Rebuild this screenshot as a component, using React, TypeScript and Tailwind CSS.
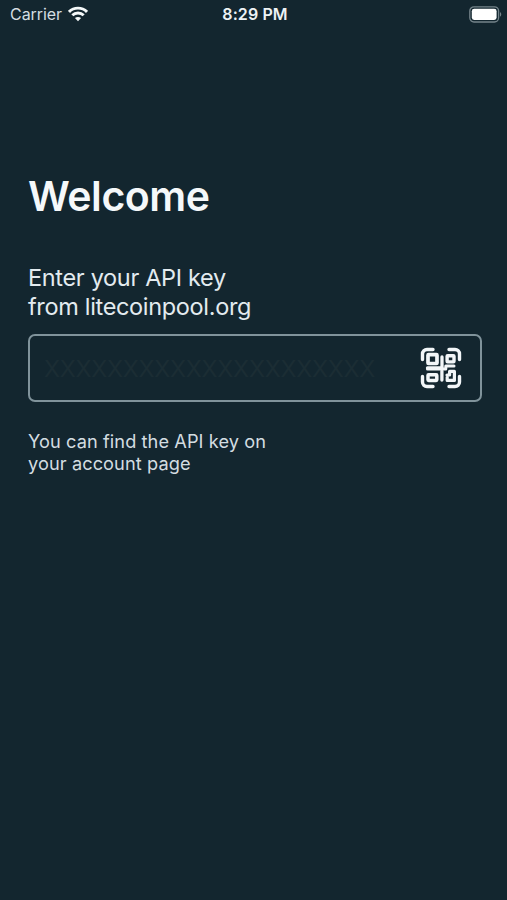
import { useState } from 'react'

function WifiIcon() {
  return (
    <svg width="20" height="16" viewBox="0 0 20 16" fill="none" stroke="#f4f8f9" strokeWidth="2.9">
      <path d="M1 5.9C6 .9 14 .9 19 5.9" />
      <path d="M4.3 9.3c3.2-3.1 8.2-3.1 11.4 0" />
      <path d="M10 15.2 6.9 12.1c1.7-1.6 4.5-1.6 6.2 0Z" fill="#f4f8f9" stroke="none" />
    </svg>
  )
}

function BatteryIcon() {
  return (
    <svg width="33" height="17" viewBox="0 0 33 17" fill="none">
      <rect x="0.8" y="0.8" width="28.8" height="15.2" rx="4.2" stroke="#75848b" strokeWidth="1.3" />
      <rect x="2.8" y="2.8" width="24.8" height="11.2" rx="2.4" fill="#ffffff" />
      <path d="M31 6c1.7.8 1.7 4 0 4.8Z" fill="#75848b" />
    </svg>
  )
}

function QrIcon() {
  return (
    <svg width="42" height="42" viewBox="0 0 42 42" fill="none" stroke="#f2f6f8" strokeWidth="3.4">
      {/* scanner frame */}
      <g strokeLinecap="round">
        <path d="M2.5 12.5V7a4.5 4.5 0 0 1 4.5-4.5h6" />
        <path d="M29 2.5h6A4.5 4.5 0 0 1 39.5 7v5.5" />
        <path d="M39.5 29.5V35a4.5 4.5 0 0 1-4.5 4.5h-6" />
        <path d="M13 39.5H7A4.5 4.5 0 0 1 2.5 35v-5.5" />
      </g>
      {/* code modules */}
      <rect x="8" y="7.7" width="9" height="8.8" rx="0.6" strokeWidth="3.7" />
      <rect x="27.1" y="8.7" width="6.9" height="6.2" rx="0.6" strokeWidth="3.4" />
      <rect x="8" y="27.8" width="8.8" height="5.6" rx="0.6" strokeWidth="3.5" />
      <path d="M22 10v11H7.5" strokeWidth="3.3" strokeLinecap="round" />
      <path d="M7.5 22h18.3v-3.1H34" strokeWidth="3" strokeLinecap="round" strokeLinejoin="round" />
      <path d="M21.9 24v9" strokeWidth="3.3" strokeLinecap="round" />
      <path d="M27 28h2.6v-3.6h4.8v9h-7.2v-3.2" strokeWidth="3.2" strokeLinecap="round" strokeLinejoin="round" />
    </svg>
  )
}

function StatusBar() {
  return (
    <header className="grid h-[28px] grid-cols-3 items-center pr-[5px] pl-[10px] text-[16px] leading-none">
      <div className="flex items-center gap-[6px] text-[#d4dde1]">
        <span className="tracking-[-0.05px]">Carrier</span>
        <WifiIcon />
      </div>
      <span className="pr-[2px] text-center font-semibold tracking-[0.1px] text-[#edf2f4]">8:29 PM</span>
      <div className="flex justify-end">
        <BatteryIcon />
      </div>
    </header>
  )
}

export default function App() {
  const [apiKey, setApiKey] = useState('')

  return (
    <div className="h-screen overflow-hidden bg-[#13262f] font-['Inter',sans-serif]">
      <StatusBar />

      <main className="pt-[144px] pr-[25px] pl-7">
        <h1 className="text-[41px] leading-[48px] font-semibold tracking-[-0.45px] whitespace-nowrap text-[#f5f8fa]">
          Welcome
        </h1>

        <label
          htmlFor="api-key"
          className="mt-[44px] block text-[23.5px] leading-[28.5px] tracking-[-0.33px] text-[#e3ebef]"
        >
          Enter your API key
          <br />
          from litecoinpool.org
        </label>

        <div className="mt-[13px] flex h-[68px] items-center rounded-[7px] border-2 border-[#80939b] pr-[18px] pl-[14px]">
          <input
            id="api-key"
            value={apiKey}
            onChange={(e) => setApiKey(e.target.value)}
            placeholder="XXXXXXXXXXXXXXXXXXXXX"
            className="min-w-0 flex-1 bg-transparent pt-[2px] text-[23.5px] tracking-[-0.27px] text-[#e3ebef] outline-none placeholder:text-[#1b2d34]"
          />
          <button type="button" aria-label="Scan QR code" className="shrink-0">
            <QrIcon />
          </button>
        </div>

        <p className="mt-[28px] text-[18.2px] leading-[22px] tracking-[0.08px] text-[#d3dde1]">
          You can find the API key on
          <br />
          your account page
        </p>
      </main>
    </div>
  )
}
